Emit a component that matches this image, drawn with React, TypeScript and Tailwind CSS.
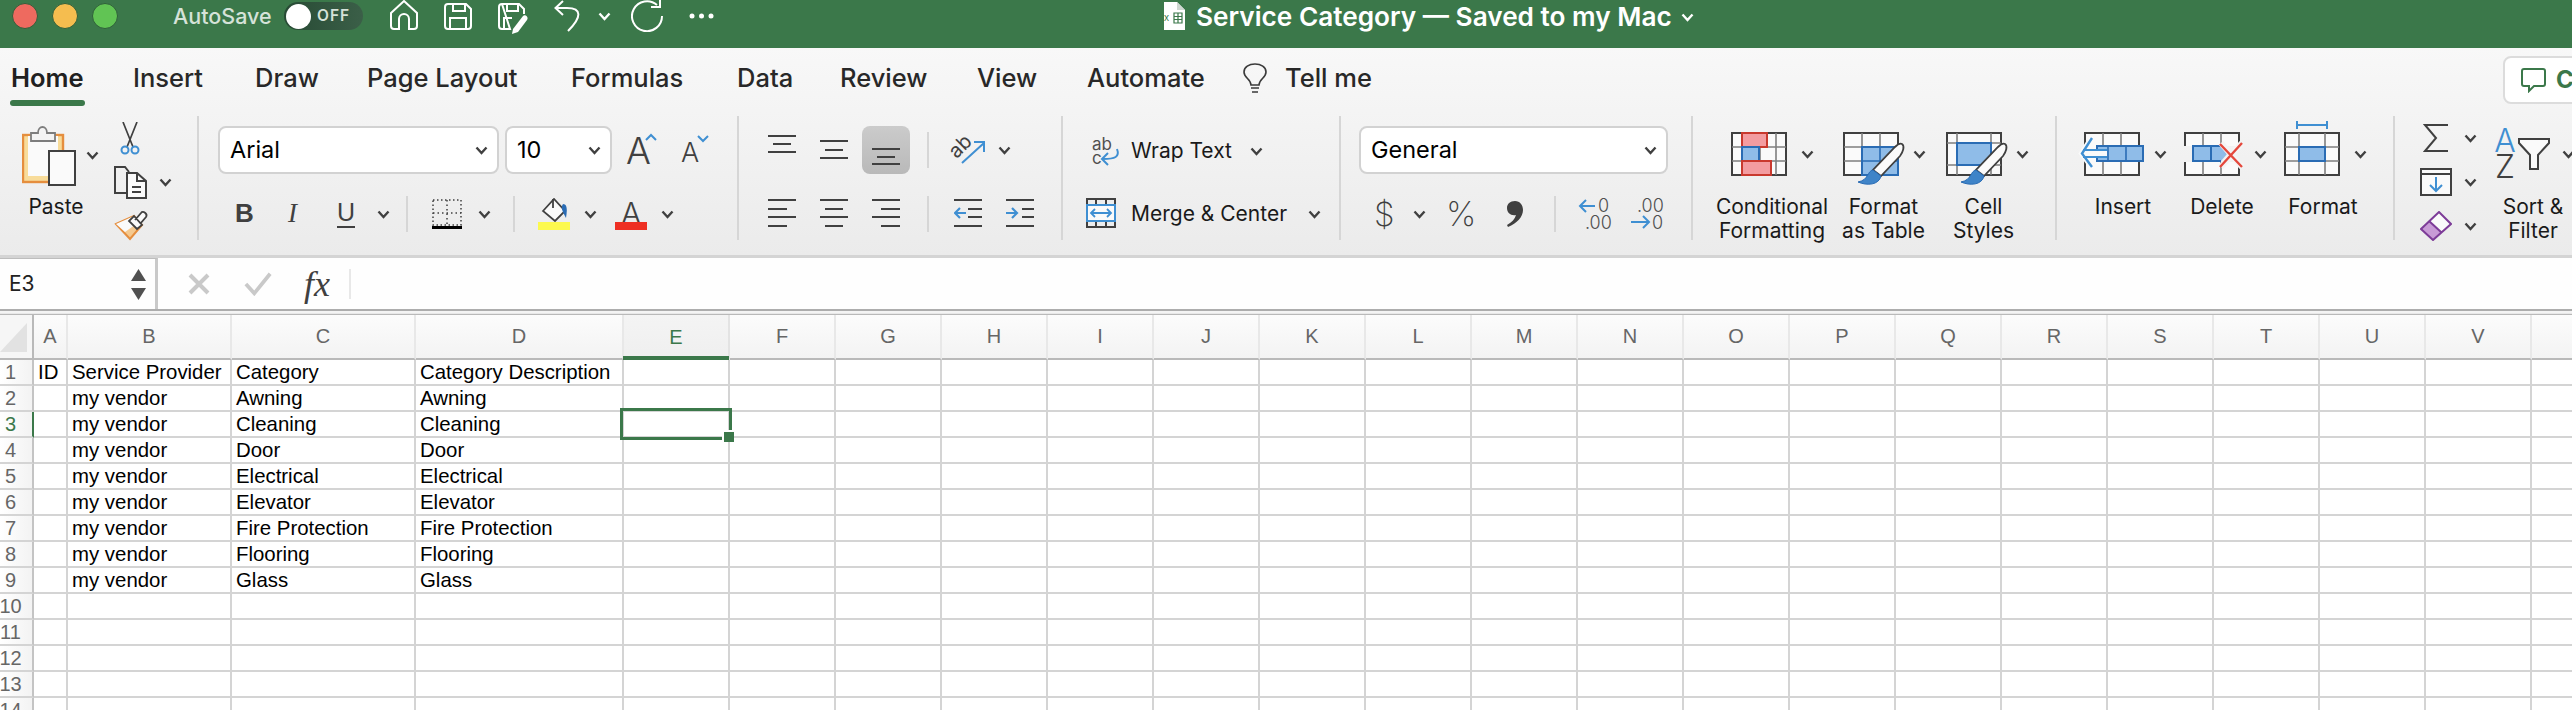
import React from "react";

const D = "#404040";
const BLUE = "#3f8fd2";

function Chev({ className = "", color = D }: { className?: string; color?: string }) {
  return (
    <svg width="13" height="9" viewBox="0 0 13 9" className={"shrink-0 " + className} fill="none">
      <path d="M1.5 1.5 L6.5 7 L11.5 1.5" stroke={color} strokeWidth="2.4" />
    </svg>
  );
}

function Lines({ rows, className = "" }: { rows: [number, number, number][]; className?: string }) {
  return (
    <svg width="28" height="30" viewBox="0 0 28 30" className={"shrink-0 " + className}>
      {rows.map((r, i) => (
        <rect key={i} x={r[0]} y={r[2]} width={r[1] - r[0]} height="2" fill={D} />
      ))}
    </svg>
  );
}

function Vsep({ className = "" }: { className?: string }) {
  return <div className={"w-[2px] bg-[#d6d6d6] shrink-0 " + className} />;
}

function Brush() {
  return (
    <g>
      <path d="M59 12 C62 14 60 20 57 24 L38 44 L30 38 L52 15 C54 13 57 11 59 12 Z" fill="#fbfbfb" stroke="#404040" strokeWidth="1.8" />
      <path d="M30 38 C24 39 26 48 15 50 C24 54 36 53 38 44 Z" fill="#3f84c8" stroke="#2a6cb4" strokeWidth="1" />
    </g>
  );
}

function CondIcon() {
  return (
    <svg width="56" height="44" viewBox="0 0 56 44" className="shrink-0 overflow-visible" fill="none">
      <rect x="1" y="1" width="54" height="42" fill="#fafafa" stroke={D} strokeWidth="2" />
      <path d="M45 1V43M1 15H55M1 29H55M29 15V29" stroke="#7f7f7f" strokeWidth="1.6" />
      <rect x="11" y="1" width="25" height="14" fill="#f39ca0" stroke="#c9392e" strokeWidth="2" />
      <rect x="11" y="15" width="17" height="14" fill="#8fbce8" stroke="#2a6cb4" strokeWidth="2" />
      <rect x="11" y="29" width="29" height="14" fill="#f39ca0" stroke="#c9392e" strokeWidth="2" />
    </svg>
  );
}

function TableIcon() {
  return (
    <svg width="60" height="44" viewBox="0 0 60 44" className="shrink-0 overflow-visible" fill="none">
      <rect x="1" y="1" width="54" height="42" fill="#fafafa" stroke={D} strokeWidth="2" />
      <path d="M19 1V43M37 1V43M1 15H55M1 29H55" stroke="#7f7f7f" strokeWidth="1.6" />
      <rect x="19" y="15" width="36" height="28" fill="#8fbce8" stroke="#2a6cb4" strokeWidth="2" />
      <path d="M19 29H55M37 15V43" stroke="#2a6cb4" strokeWidth="1.6" />
      <Brush />
    </svg>
  );
}

function StylesIcon() {
  return (
    <svg width="60" height="44" viewBox="0 0 60 44" className="shrink-0 overflow-visible" fill="none">
      <rect x="1" y="1" width="54" height="42" fill="#fafafa" stroke={D} strokeWidth="2" />
      <path d="M11 1V43M45 1V43M1 11H55M1 33H55" stroke="#7f7f7f" strokeWidth="1.6" />
      <rect x="11" y="11" width="34" height="22" fill="#8fbce8" stroke="#2a6cb4" strokeWidth="2" />
      <Brush />
    </svg>
  );
}

function InsertIcon() {
  return (
    <svg width="64" height="44" viewBox="0 0 64 44" className="shrink-0 overflow-visible" fill="none">
      <rect x="5" y="1" width="54" height="42" fill="#fafafa" stroke={D} strokeWidth="2" />
      <path d="M23 1V43M41 1V43" stroke="#7f7f7f" strokeWidth="1.6" />
      <rect x="17" y="14" width="46" height="15" fill="#8fbce8" stroke="#2a6cb4" strokeWidth="2" />
      <path d="M28 14V29M46 14V29" stroke="#2a6cb4" strokeWidth="1.6" />
      <path d="M12 6 L2 21.500 L12 35 M2 21.500 H27" stroke="#fafafa" strokeWidth="6" />
      <path d="M12 6 L2 21.500 L12 35" stroke={BLUE} strokeWidth="2.4" />
      <path d="M3 18 H27 M3 25 H27" stroke={BLUE} strokeWidth="1.8" />
    </svg>
  );
}

function DeleteIcon() {
  return (
    <svg width="60" height="44" viewBox="0 0 60 44" className="shrink-0 overflow-visible" fill="none">
      <path d="M1 14 V1 H55 V14 M1 30 V43 H55 V30" fill="#fafafa" stroke={D} strokeWidth="2" />
      <path d="M19 1V14M37 1V14M19 30V43M37 30V43" stroke="#7f7f7f" strokeWidth="1.6" />
      <path d="M9 14 H37 L43 22 L37 29 H9 Z" fill="#8fbce8" />
      <path d="M37 14 H9 V29 H37 M27 14V29" stroke="#2a6cb4" strokeWidth="2" />
      <path d="M37 11 L58 35 M58 11 L37 35" stroke="#f4f4f4" strokeWidth="6" />
      <path d="M36 12 L58 35 M58 11 L36 35" stroke="#e4483c" strokeWidth="2.4" />
    </svg>
  );
}

function FormatIcon() {
  return (
    <svg width="56" height="44" viewBox="0 0 56 44" className="shrink-0 overflow-visible" fill="none">
      <path d="M13 -7 H43 M13 -11 V-3 M43 -11 V-3" stroke={BLUE} strokeWidth="2" />
      <rect x="1" y="1" width="54" height="42" fill="#fafafa" stroke={D} strokeWidth="2" />
      <path d="M15 1V43M41 1V43M1 15H55M1 29H55" stroke="#7f7f7f" strokeWidth="1.6" />
      <rect x="15" y="15" width="26" height="14" fill="#8fbce8" stroke="#2a6cb4" strokeWidth="2" />
    </svg>
  );
}

function ToolbarGlyph({ children, className = "" }: { children: React.ReactNode; className?: string }) {
  return <span className={"shrink-0 leading-none text-[#404040] " + className}>{children}</span>;
}

function Clipboard() {
  return (
    <svg width="54" height="60" viewBox="0 0 54 60" className="shrink-0" fill="none">
      <rect x="1" y="9" width="40" height="47" fill="#f8dc9a" stroke="#e58e3e" strokeWidth="2.4" />
      <path d="M6 10 H36 V40 H30 V50 H6 Z" fill="#fafafa" />
      <path d="M9 15 V7 H16 C16 -1 25 -1 25 7 H33 V15 Z" fill="#f3f3f3" stroke="#7d7d7d" strokeWidth="1.8" />
      <rect x="27" y="25" width="26" height="34" fill="#fafafa" stroke={D} strokeWidth="2" />
    </svg>
  );
}

function FileBadge() {
  return (
    <svg width="23" height="28" viewBox="0 0 23 28" className="shrink-0">
      <path d="M2 0 H15 L23 8 V28 H2 Z" fill="#fff" />
      <path d="M15 0 L23 8 H15 Z" fill="#cfd8d1" />
      <text x="2" y="19" fontSize="10" fill="#3b784a" fontFamily="Liberation Sans">x</text>
      <path d="M12 11 H20 V21 H12 Z M12 14.500 H20 M12 17.500 H20 M16 11 V21" fill="none" stroke="#3b784a" strokeWidth="1.200" />
    </svg>
  );
}

const tabs: [string, string][] = [
  ["Home", "w-[122px] font-semibold text-[#202020]"],
  ["Insert", "w-[122px] font-medium"],
  ["Draw", "w-[112px] font-medium"],
  ["Page Layout", "w-[204px] font-medium"],
  ["Formulas", "w-[166px] font-medium"],
  ["Data", "w-[103px] font-medium"],
  ["Review", "w-[137px] font-medium"],
  ["View", "w-[110px] font-medium"],
  ["Automate", "w-[155px] font-medium"],
];

const colLetters = "ABCDEFGHIJKLMNOPQRSTUV".split("").concat([""]);
const dataRows: [string, string, string, string][] = [
  ["ID", "Service Provider", "Category", "Category Description"],
  ["", "my vendor", "Awning", "Awning"],
  ["", "my vendor", "Cleaning", "Cleaning"],
  ["", "my vendor", "Door", "Door"],
  ["", "my vendor", "Electrical", "Electrical"],
  ["", "my vendor", "Elevator", "Elevator"],
  ["", "my vendor", "Fire Protection", "Fire Protection"],
  ["", "my vendor", "Flooring", "Flooring"],
  ["", "my vendor", "Glass", "Glass"],
  ["", "", "", ""],
  ["", "", "", ""],
  ["", "", "", ""],
  ["", "", "", ""],
  ["", "", "", ""],
];

function Sheet() {
  const cell = "h-[26px] border-r-2 border-b-2 border-[#d4d4d4] pl-[4px] pt-[1px] overflow-visible whitespace-nowrap leading-[23px] text-[20.4px] text-black bg-white";
  return (
    <div className="grid grid-cols-[34px_34px_164px_184px_208px_repeat(19,106px)] font-['Liberation_Sans',sans-serif]">
      <div className="h-[45px] border-b-2 border-r-2 border-[#b9b9b9] bg-[#f6f6f6] flex items-center">
        <svg width="28" height="30" viewBox="0 0 28 30"><path d="M27 1 V30 H0 Z" fill="#e2e2e2" /></svg>
      </div>
      {colLetters.map((l) => (
        <div
          key={l}
          className={
            l === "E"
              ? "relative h-[45px] border-r-2 border-[#e3e3e3] bg-gradient-to-b from-[#f4f4f4] to-[#efefef] flex items-center justify-center pb-[2px] text-[20px] text-[#3b784a]"
              : "h-[45px] border-b-2 border-r-2 border-b-[#b9b9b9] border-r-[#e8e8e8] bg-gradient-to-b from-[#fcfcfc] to-[#f3f3f3] flex items-center justify-center pb-[2px] text-[20px] text-[#666666]"
          }
        >
          {l}
          {l === "E" && <div className="absolute -left-[1px] right-[-1px] bottom-0 h-[4px] bg-[#3b784a]" />}
        </div>
      ))}
      {dataRows.map((r, i) => (
        <React.Fragment key={i}>
          <div
            className={
              "h-[26px] border-b-2 border-b-[#d4d4d4] border-r-2 bg-gradient-to-r from-[#ffffff] to-[#f3f3f3] text-[20px] leading-[23px] pt-[1px] overflow-hidden " +
              (i === 2 ? "border-r-[#3b784a] text-[#3b784a]" : "border-r-[#c4c4c4] text-[#666666]")
            }
          >
            <div className="w-[21px] flex justify-center whitespace-nowrap">{i + 1}</div>
          </div>
          {r.map((t, j) => (
            <div key={j} className={cell}>{t}</div>
          ))}
          {colLetters.slice(4).map((l) => (
            <div key={l} className={"relative " + cell}>
              {i === 2 && l === "E" && (
                <div className="absolute left-[-4px] top-[-4px] w-[112px] h-[32px] border-[3.500px] border-[#3b784a] z-10">
                  <div className="absolute right-[-5px] bottom-[-5px] w-[12px] h-[12px] bg-[#3b784a] border-l-2 border-t-2 border-white" />
                </div>
              )}
            </div>
          ))}
        </React.Fragment>
      ))}
    </div>
  );
}

export default function App() {
  return (
    <div className="w-[2572px] h-[710px] overflow-hidden bg-white font-[Inter,sans-serif]">
      {/* Title bar */}
      <div className="h-[48px] bg-[#3b784a] flex items-start">
        <div className="flex gap-[14px] ml-[12px] mt-[3px]">
          <div className="w-[26px] h-[26px] rounded-full bg-[#ee6a5f] border border-[#2f5f3a]" />
          <div className="w-[26px] h-[26px] rounded-full bg-[#f5bd4f] border border-[#2f5f3a]" />
          <div className="w-[26px] h-[26px] rounded-full bg-[#61c454] border border-[#2f5f3a]" />
        </div>
        <span className="ml-[55px] mt-[3px] text-[21.500px] leading-[26px] font-medium text-[#d5e2d8] whitespace-nowrap w-[111px]">AutoSave</span>
        <div className="mt-[2px] w-[79px] h-[28px] rounded-full bg-gradient-to-r from-[#274a34] to-[#3b5f48] flex items-center pl-[2px]">
          <div className="w-[25px] h-[25px] rounded-full bg-white" />
          <span className="ml-[6px] text-[15.500px] font-semibold tracking-[1px] text-[#d5e2d8]">OFF</span>
        </div>
        <svg width="28" height="30" viewBox="0 0 28 30" className="ml-[27px] shrink-0 overflow-visible" fill="none" stroke="#fff" strokeWidth="2">
          <path d="M1 13 L14 1 L27 13 V26 a3 3 0 0 1-3 3 H19 V19 a5 5 0 0 0-10 0 V29 H4 a3 3 0 0 1-3-3 Z" />
        </svg>
        <svg width="28" height="27" viewBox="0 0 28 27" className="ml-[26px] mt-[3px] shrink-0" fill="none" stroke="#fff" strokeWidth="2">
          <path d="M4 1 H22 L27 6 V23 a3 3 0 0 1-3 3 H4 a3 3 0 0 1-3-3 V4 a3 3 0 0 1 3-3 Z M9 1 V8 H21 V1 M6 26 V15 H22 V26" />
        </svg>
        <svg width="31" height="30" viewBox="0 0 31 30" className="ml-[26px] mt-[3px] shrink-0 overflow-visible" fill="none" stroke="#fff" strokeWidth="2">
          <path d="M4 1 H21 L26 6 V11 M12 26 H4 a3 3 0 0 1-3-3 V4 a3 3 0 0 1 3-3 Z M9 1 V8 H20 V1 M6 26 V15 H14" />
          <path d="M15 26 L25 13 C27 11 31 14 29 17 L20 29 L14 31 Z" fill="#fff" stroke="none" />
        </svg>
        <svg width="27" height="32" viewBox="0 0 27 32" className="ml-[25px] shrink-0" fill="none" stroke="#fff" strokeWidth="2">
          <path d="M9 1 L1.500 8 L9 15 M1.500 8 H13 C28 8 28 17 14 31" />
        </svg>
        <Chev color="#ffffff" className="ml-[17px] mt-[12px]" />
        <svg width="33" height="32" viewBox="0 0 33 32" className="ml-[20px] shrink-0" fill="none" stroke="#fff" strokeWidth="2">
          <path d="M26 5 A15 15 0 1 0 31 16 M20 7 H29 V0" />
        </svg>
        <svg width="25" height="6" viewBox="0 0 25 6" className="ml-[25px] mt-[13px] shrink-0" fill="#fff">
          <circle cx="3" cy="3" r="2.500" />
          <circle cx="12.500" cy="3" r="2.500" />
          <circle cx="22" cy="3" r="2.500" />
        </svg>
        <div className="ml-[448px] mt-[2px]"><FileBadge /></div>
        <span className="ml-[11px] mt-[3px] w-[485px] text-[26.200px] leading-[28px] font-semibold text-white whitespace-nowrap">Service Category — Saved to my Mac</span>
        <Chev color="#ffffff" className="mt-[13px]" />
      </div>

      <div className="h-[210px] border-b-[3px] border-[#d4d4d4] bg-gradient-to-b from-[#f8f8f8] to-[#ebebeb]">
        {/* Tabs */}
        <div className="h-[68px] flex items-start">
          <div className="flex items-start pl-[11px] pt-[15px] text-[25.500px] leading-[29px] text-[#282828] whitespace-nowrap">
            {tabs.map(([t, c]) => (
              <div key={t} className={c}>
                <span className="relative inline-block">
                  {t}
                  {t === "Home" && <span className="absolute left-[-1px] right-[-1px] top-[37px] h-[6px] rounded-full bg-[#3b784a]" />}
                </span>
              </div>
            ))}
            <svg width="26" height="31" viewBox="0 0 26 31" className="shrink-0" fill="none" stroke="#3a3a3a" strokeWidth="1.600">
              <path d="M9 22 C9 16 2 15 2 9 C2 4 7 1 13 1 C19 1 24 4 24 9 C24 15 17 16 17 22 Z M9 25 H17 M10 29 H16" />
            </svg>
            <span className="ml-[17px] w-[86px] font-medium">Tell me</span>
          </div>
          <div className="ml-[1132px] mt-[8px] w-[120px] h-[48px] shrink-0 rounded-lg border-2 border-[#dcdcdc] bg-white flex items-center pl-[16px]">
            <svg width="25" height="25" viewBox="0 0 25 25" className="shrink-0" fill="none" stroke="#3b784a" strokeWidth="2">
              <path d="M3 1 H22 a2 2 0 0 1 2 2 V16 a2 2 0 0 1-2 2 H13 L8 23 V18 H3 a2 2 0 0 1-2-2 V3 a2 2 0 0 1 2-2 Z" />
            </svg>
            <span className="ml-[10px] text-[24px] font-bold text-[#3b784a]">Comments</span>
          </div>
        </div>

        {/* Ribbon */}
        <div className="h-[139px] flex items-start text-[21px] leading-[24px] text-[#1a1a1a]">
          {/* Clipboard */}
          <div className="w-[197px] shrink-0 flex">
            <div className="ml-[16px] w-[80px] flex flex-col items-center pt-[10px]">
              <div className="flex w-full">
                <div className="ml-[6px]"><Clipboard /></div>
                <Chev className="ml-[10px] mt-[25px]" />
              </div>
              <span className="mt-[9px]">Paste</span>
            </div>
            <div className="ml-[16px] flex flex-col">
              <svg width="22" height="33" viewBox="0 0 22 33" className="ml-[7px] mt-[6px]" fill="none">
                <path d="M4 0 L14 25 M18 0 L8 25" stroke={D} strokeWidth="1.700" />
                <circle cx="6" cy="28" r="3.500" stroke={BLUE} strokeWidth="2" />
                <circle cx="16" cy="28" r="3.500" stroke={BLUE} strokeWidth="2" />
              </svg>
              <div className="flex items-center mt-[11px]">
                <svg width="33" height="33" viewBox="0 0 33 33" className="ml-[2px] shrink-0" fill="none" stroke={D} strokeWidth="2">
                  <path d="M13 27 H1 V1 H11 L15 6" />
                  <path d="M13 7 H23 L32 15 V32 H13 Z" fill="#fafafa" />
                  <path d="M23 7 V15 H32 M18 21 H27 M18 26 H27" />
                </svg>
                <Chev className="ml-[12px]" />
              </div>
              <svg width="33" height="30" viewBox="0 0 33 30" className="ml-[3px] mt-[11px] overflow-visible" fill="none">
                <path d="M1 14 L19 6 L27 15 L15 29 Z" fill="#f5c98f" stroke="#e58e3e" strokeWidth="2" />
                <path d="M1 14 L19 6 L24 12 L10 22 Z" fill="#fafafa" />
                <path d="M19 6 L27 15 L22 19 L14 11 Z M20 10 L26 3 C28 0 33 4 31 7 L25 14" fill="#fafafa" stroke={D} strokeWidth="1.800" />
              </svg>
            </div>
          </div>
          <Vsep className="h-[124px]" />

          {/* Font */}
          <div className="w-[538px] shrink-0 flex flex-col pt-[10px]">
            <div className="flex items-center h-[48px] pl-[19px]">
              <div className="w-[281px] h-[48px] rounded-lg border-2 border-[#d2d2d2] bg-white flex items-center pl-[10px] pr-[9px] justify-between text-[23.500px] text-black">
                <span>Arial</span>
                <Chev />
              </div>
              <div className="ml-[6px] w-[107px] h-[48px] rounded-lg border-2 border-[#d2d2d2] bg-white flex items-center pl-[10px] pr-[9px] justify-between text-[23.500px] text-black">
                <span>10</span>
                <Chev />
              </div>
              <div className="ml-[14px] w-[32px] shrink-0 flex relative">
                <ToolbarGlyph className="text-[37px] font-light">A</ToolbarGlyph>
                <svg width="10" height="7" viewBox="0 0 10 7" className="absolute left-[20px] top-[2px] overflow-visible" fill="none"><path d="M0 6 L5 1 L10 6" stroke={BLUE} strokeWidth="2" /></svg>
              </div>
              <div className="ml-[23px] w-[28px] shrink-0 flex relative mt-[4px]">
                <ToolbarGlyph className="text-[27px] font-light">A</ToolbarGlyph>
                <svg width="10" height="7" viewBox="0 0 10 7" className="absolute left-[17px] top-[-4px] overflow-visible" fill="none"><path d="M0 1 L5 6 L10 1" stroke={BLUE} strokeWidth="2" /></svg>
              </div>
            </div>
            <div className="flex items-center h-[36px] mt-[22px]">
              <ToolbarGlyph className="ml-[36px] w-[18px] text-[26px] font-['Liberation_Sans',sans-serif] font-bold -mt-[2px]">B</ToolbarGlyph>
              <ToolbarGlyph className="ml-[35px] w-[16px] text-[27px] font-['Liberation_Serif',serif] italic -mt-[2px]">I</ToolbarGlyph>
              <div className="ml-[33px] w-[18px] flex flex-col items-center">
                <ToolbarGlyph className="text-[25px] font-light font-['Liberation_Sans',sans-serif]">U</ToolbarGlyph>
                <div className="w-[18px] h-[2px] bg-[#404040] mt-[1px]" />
              </div>
              <Chev className="ml-[22px]" />
              <Vsep className="ml-[16px] h-[36px]" />
              <svg width="30" height="30" viewBox="0 0 30 30" className="ml-[24px] shrink-0" fill="none">
                <rect x="1" y="1" width="28" height="25" stroke={D} strokeWidth="1.500" strokeDasharray="1.500 2.500" />
                <path d="M15 1V26M1 14H29" stroke={D} strokeWidth="1.500" strokeDasharray="1.500 3" />
                <rect x="0" y="27" width="30" height="3" fill="#000" />
              </svg>
              <Chev className="ml-[16px]" />
              <Vsep className="ml-[22px] h-[36px]" />
              <div className="ml-[23px] w-[32px] shrink-0 flex flex-col items-center">
                <svg width="26" height="24" viewBox="0 0 26 24" fill="none">
                  <path d="M2 13 L13 1 L24 13 L14 23 Z" fill="#fafafa" stroke={D} strokeWidth="1.800" />
                  <path d="M12 1 V10" stroke={D} strokeWidth="1.800" />
                  <path d="M22 6 C27 6 26 14 25 20 C22 14 19 10 22 6 Z" fill="#2a6cb4" />
                </svg>
                <div className="w-[32px] h-[8px] bg-[#fcf94f]" />
              </div>
              <Chev className="ml-[14px]" />
              <div className="ml-[18px] w-[32px] shrink-0 flex flex-col items-center">
                <ToolbarGlyph className="h-[24px] text-[30px] font-light">A</ToolbarGlyph>
                <div className="w-[32px] h-[8px] bg-[#ee2f23]" />
              </div>
              <Chev className="ml-[14px]" />
            </div>
          </div>
          <Vsep className="h-[124px]" />

          {/* Alignment */}
          <div className="w-[322px] shrink-0 flex flex-col pt-[10px]">
            <div className="flex items-center h-[48px] pl-[29px]">
              <Lines rows={[[0, 28, 0], [5, 23, 8], [0, 28, 16]]} />
              <Lines className="ml-[24px]" rows={[[0, 28, 5], [5, 23, 14], [0, 28, 22]]} />
              <div className="ml-[14px] w-[48px] h-[48px] shrink-0 rounded-lg bg-gradient-to-b from-[#cbcbcb] to-[#b9b9b9] flex items-center justify-center">
                <Lines rows={[[0, 28, 13], [5, 23, 21], [0, 28, 28]]} />
              </div>
              <Vsep className="ml-[17px] h-[36px]" />
              <svg width="34" height="32" viewBox="0 0 34 32" className="ml-[23px] shrink-0 overflow-visible" fill="none">
                <text x="-1" y="20" fontSize="20" fill="#404040" transform="rotate(-45 8 16)" fontFamily="Inter">ab</text>
                <path d="M10 29 L32 9 M22 8 H32 V18" stroke={BLUE} strokeWidth="2" />
              </svg>
              <Chev className="ml-[12px]" />
            </div>
            <div className="flex items-center h-[36px] mt-[22px] pl-[29px]">
              <Lines rows={[[0, 28, 0], [0, 19, 9], [0, 28, 17], [0, 19, 26]]} />
              <Lines className="ml-[24px]" rows={[[0, 28, 0], [5, 23, 9], [0, 28, 17], [5, 23, 26]]} />
              <Lines className="ml-[24px]" rows={[[0, 28, 0], [9, 28, 9], [0, 28, 17], [9, 28, 26]]} />
              <Vsep className="ml-[27px] h-[36px]" />
              <svg width="28" height="30" viewBox="0 0 28 30" className="ml-[25px] shrink-0" fill="none">
                <path d="M0 1H28M14 10H28M14 18H28M0 27H28" stroke={D} strokeWidth="2" />
                <path d="M12 14 H1 M6 9 L1 14 L6 19" stroke={BLUE} strokeWidth="2.200" />
              </svg>
              <svg width="28" height="30" viewBox="0 0 28 30" className="ml-[24px] shrink-0" fill="none">
                <path d="M0 1H28M16 10H28M16 18H28M0 27H28" stroke={D} strokeWidth="2" />
                <path d="M0 14 H11 M6 9 L11 14 L6 19" stroke={BLUE} strokeWidth="2.200" />
              </svg>
            </div>
          </div>
          <Vsep className="h-[124px]" />

          {/* Wrap / Merge */}
          <div className="w-[276px] shrink-0 flex flex-col">
            <div className="flex items-center ml-[28px] mt-[20px] h-[30px]">
              <svg width="30" height="30" viewBox="0 0 30 30" className="shrink-0 overflow-visible" fill="none">
                <text x="1" y="14" fontSize="17" fill="#505050" fontFamily="Inter">ab</text>
                <text x="1" y="28" fontSize="17" fill="#505050" fontFamily="Inter">c</text>
                <path d="M26 13 C29 21 24 23 12 23 M17 17 L11 23 L17 29" stroke={BLUE} strokeWidth="2" />
              </svg>
              <span className="ml-[10px] w-[119px] whitespace-nowrap">Wrap Text</span>
              <Chev />
            </div>
            <div className="flex items-center ml-[23px] mt-[33px] h-[30px]">
              <svg width="30" height="30" viewBox="0 0 30 30" className="shrink-0 -mt-[2px]" fill="none">
                <rect x="1" y="1" width="28" height="28" stroke={D} strokeWidth="2" />
                <path d="M10 1V7M20 1V7M10 23V29M20 23V29" stroke={D} strokeWidth="2" />
                <rect x="1" y="7" width="28" height="16" fill="#fafafa" stroke={BLUE} strokeWidth="2" />
                <path d="M5 15H25M9 11L5 15L9 19M21 11L25 15L21 19" stroke={BLUE} strokeWidth="1.800" />
              </svg>
              <span className="ml-[15px] w-[177px] whitespace-nowrap">Merge &amp; Center</span>
              <Chev />
            </div>
          </div>
          <Vsep className="h-[124px]" />

          {/* Number */}
          <div className="w-[350px] shrink-0 flex flex-col pt-[10px]">
            <div className="ml-[18px] w-[309px] h-[48px] rounded-lg border-2 border-[#d2d2d2] bg-white flex items-center justify-between pl-[10px] pr-[9px] text-[23.500px] text-black">
              <span>General</span>
              <Chev />
            </div>
            <div className="flex items-center h-[36px] mt-[22px] pl-[33px]">
              <ToolbarGlyph className="w-[18px] text-[33px] font-extralight">$</ToolbarGlyph>
              <Chev className="ml-[21px]" />
              <ToolbarGlyph className="ml-[20px] w-[31px] text-[34px] font-extralight">%</ToolbarGlyph>
              <svg width="16" height="28" viewBox="0 0 16 28" className="ml-[30px] shrink-0" fill={D}>
                <path d="M8 1 C13 1 16 5 16 10 C16 17 10 23 1 27 L0 25 C5 22 8 19 9 15 C4 16 0 13 0 8 C0 4 3 1 8 1 Z" />
              </svg>
              <Vsep className="ml-[31px] h-[36px]" />
              <svg width="32" height="32" viewBox="0 0 32 32" className="ml-[23px] shrink-0 overflow-visible" fill="none">
                <text x="19" y="14" fontSize="18" fill="#505050" fontFamily="Inter" fontWeight="300">0</text>
                <text x="6" y="31" fontSize="18" fill="#505050" fontFamily="Inter" fontWeight="300">.00</text>
                <path d="M1 8 H16 M7 2 L1 8 L7 14" stroke={BLUE} strokeWidth="2" />
              </svg>
              <svg width="32" height="32" viewBox="0 0 32 32" className="ml-[20px] shrink-0 overflow-visible" fill="none">
                <text x="6" y="14" fontSize="18" fill="#505050" fontFamily="Inter" fontWeight="300">.00</text>
                <text x="21" y="31" fontSize="18" fill="#505050" fontFamily="Inter" fontWeight="300">0</text>
                <path d="M0 24 H18 M12 18 L18 24 L12 30" stroke={BLUE} strokeWidth="2" />
              </svg>
            </div>
          </div>
          <Vsep className="h-[124px]" />

          {/* Styles */}
          <div className="w-[362px] shrink-0 flex pl-[19px] text-center">
            <div className="w-[120px] shrink-0 flex flex-col pt-[16px]">
              <div className="flex items-center h-[44px]">
                <div className="ml-[19px]"><CondIcon /></div>
                <Chev className="ml-[14px]" />
              </div>
              <span className="mt-[19px]">Conditional<br />Formatting</span>
            </div>
            <div className="w-[103px] shrink-0 flex flex-col pt-[16px]">
              <div className="flex items-center h-[44px]">
                <div className="ml-[11px]"><TableIcon /></div>
                <Chev className="ml-[10px]" />
              </div>
              <span className="mt-[19px]">Format<br />as Table</span>
            </div>
            <div className="w-[97px] shrink-0 flex flex-col pt-[16px]">
              <div className="flex items-center h-[44px]">
                <div className="ml-[11px]"><StylesIcon /></div>
                <Chev className="ml-[10px]" />
              </div>
              <span className="mt-[19px]">Cell<br />Styles</span>
            </div>
          </div>
          <Vsep className="h-[124px]" />

          {/* Cells */}
          <div className="w-[336px] shrink-0 flex pl-[17px] text-center">
            <div className="w-[98px] shrink-0 flex flex-col pt-[16px]">
              <div className="flex items-center h-[44px]">
                <div className="ml-[6px]"><InsertIcon /></div>
                <Chev className="ml-[10px]" />
              </div>
              <span className="mt-[19px]">Insert</span>
            </div>
            <div className="w-[100px] shrink-0 flex flex-col pt-[16px]">
              <div className="flex items-center h-[44px]">
                <div className="ml-[12px]"><DeleteIcon /></div>
                <Chev className="ml-[10px]" />
              </div>
              <span className="mt-[19px]">Delete</span>
            </div>
            <div className="w-[102px] shrink-0 flex flex-col pt-[16px]">
              <div className="flex items-center h-[44px]">
                <div className="ml-[12px]"><FormatIcon /></div>
                <Chev className="ml-[14px]" />
              </div>
              <span className="mt-[19px]">Format</span>
            </div>
          </div>
          <Vsep className="h-[124px]" />

          {/* Editing */}
          <div className="w-[83px] shrink-0 flex flex-col pt-[8px]">
            <div className="flex items-center h-[28px]">
              <svg width="26" height="28" viewBox="0 0 26 28" className="ml-[28px] shrink-0" fill="none">
                <path d="M25 1 H2 L13 14 L2 27 H25" stroke={D} strokeWidth="2" />
              </svg>
              <Chev className="ml-[15px]" />
            </div>
            <div className="flex items-center h-[28px] mt-[16px]">
              <svg width="32" height="28" viewBox="0 0 32 28" className="ml-[25px] shrink-0" fill="none">
                <rect x="1" y="1" width="30" height="26" fill="#fafafa" stroke={D} strokeWidth="2" />
                <path d="M1 6 H31" stroke={D} strokeWidth="2" />
                <path d="M16 9 V23 M10 17 L16 23 L22 17" stroke={BLUE} strokeWidth="2" />
              </svg>
              <Chev className="ml-[12px]" />
            </div>
            <div className="flex items-center h-[30px] mt-[15px]">
              <svg width="32" height="30" viewBox="0 0 32 30" className="ml-[25px] shrink-0" fill="none">
                <path d="M1 18 L19 1 L31 13 L13 29 Z" fill="#fafafa" />
                <path d="M1 18 L9 10 L21 21 L13 29 Z" fill="#c89bd6" />
                <path d="M1 18 L19 1 L31 13 L13 29 Z M9 10 L21 21" stroke="#7d3c98" strokeWidth="2" />
              </svg>
              <Chev className="ml-[12px]" />
            </div>
          </div>
          <div className="w-[110px] shrink-0 flex flex-col items-center pt-[12px] text-center">
            <div className="flex items-center w-full h-[52px]">
              <div className="ml-[16px] w-[22px] flex flex-col items-center text-[32px] font-light leading-[26px]">
                <span className="text-[#3f8fd2]">A</span>
                <span className="text-[#404040]">Z</span>
              </div>
              <svg width="32" height="32" viewBox="0 0 32 32" className="ml-[2px] shrink-0" fill="none">
                <path d="M1 1 H31 V5 L20 17 V31 H12 V17 L1 5 Z" fill="#fafafa" stroke={D} strokeWidth="2" />
              </svg>
              <Chev className="ml-[12px]" />
            </div>
            <span className="mt-[15px] whitespace-nowrap">Sort &amp;<br />Filter</span>
          </div>
        </div>
      </div>

      {/* Formula bar */}
      <div className="h-[53px] bg-[#fefefe] border-b-2 border-[#adadad] flex items-center">
        <div className="w-[158px] h-full shrink-0 border-r-[3px] border-t border-t-[#bdbdbd] border-r-[#c9c9c9] flex items-center justify-between pl-[9px] pr-[9px] text-[21px] text-[#222222]">
          <span>E3</span>
          <div className="flex flex-col gap-[7px]">
            <svg width="15" height="12" viewBox="0 0 15 12"><path d="M7.500 0 L15 12 H0 Z" fill="#505050" /></svg>
            <svg width="15" height="12" viewBox="0 0 15 12"><path d="M0 0 H15 L7.500 12 Z" fill="#505050" /></svg>
          </div>
        </div>
        <svg width="22" height="22" viewBox="0 0 22 22" className="ml-[30px] shrink-0" fill="none">
          <path d="M2 2 L20 20 M20 2 L2 20" stroke="#c9c9c9" strokeWidth="4" />
        </svg>
        <svg width="28" height="24" viewBox="0 0 30 24" className="ml-[34px] shrink-0" fill="none">
          <path d="M2 12 L11 22 L28 1" stroke="#c9c9c9" strokeWidth="4" />
        </svg>
        <span className="ml-[32px] w-[30px] text-[36px] italic font-['Liberation_Serif',serif] text-[#404040] leading-none">fx</span>
        <div className="ml-[15px] w-[2px] h-[30px] bg-[#e8e8e8]" />
      </div>
      <div className="h-[3px] bg-[#f4f4f4] border-b border-[#e8e8e8]" />
      <div className="h-[1px] bg-[#b9b9b9]" />

      <Sheet />
    </div>
  );
}
